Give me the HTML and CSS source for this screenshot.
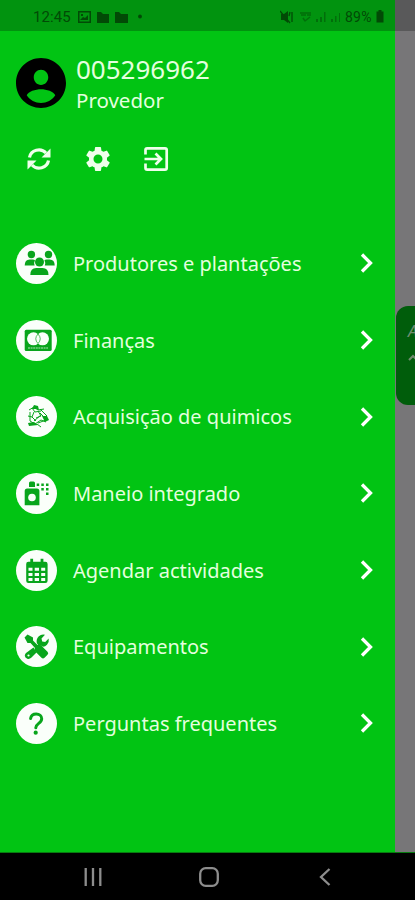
FILE: index.html
```html
<!DOCTYPE html>
<html lang="pt">
<head>
<meta charset="utf-8">
<title>Menu</title>
<link rel="stylesheet" href="styles.css">
</head>
<body>
<div class="phone">
  <div class="screen">
    <aside class="drawer">
      <header class="status">
        <span class="clock">12:45</span>
        <svg class="status-left" width="66" height="14" viewBox="0 0 66 14">
          <path fill-rule="evenodd" d="M0 1h13v12H0zM1.500 2.500v9h10v-9z"/><path d="M2 10l3-3 2 1 3-3v5zM3 4h2v2H3z"/>
          <path d="M19 2h4l2 2h6v9H19zM37 2h4l2 2h7v9H37z"/>
          <circle cx="62" cy="6.500" r="1.900"/>
        </svg>
        <svg class="status-right" width="62" height="14" viewBox="0 0 62 14">
          <path d="M1 4h3l4-3v12L4 10H1z"/>
          <path d="M0 1l10 12M10 2l-1 4M12 2v10" fill="none" stroke="#024a06" stroke-width="1.300"/>
          <g opacity=".5"><path d="M20 3h11M21 5h5M27 5h4M23 8l2 3M25 11l5-4" fill="none" stroke="#024a06" stroke-width="1.400"/>
          <path d="M36 12v-3h2v3zM40 12V7h2v5zM44 12V2h1.500v10zM51 12V9h2v3zM55 12V6h1.500v6zM59 12V3h1v9z"/></g>
        </svg>
        <span class="percent">89%</span>
        <svg class="battery" width="8" height="13" viewBox="0 0 8 13"><path d="M2.500 0h3v1.500H7.500V12.500H.5V1.500h2z"/></svg>
      </header>

      <section class="profile">
        <svg width="50" height="50" viewBox="2 2 20 20"><path d="M12 2C6.480 2 2 6.480 2 12s4.480 10 10 10 10-4.480 10-10S17.520 2 12 2zm0 4.700c1.600 0 2.900 1.350 2.900 3s-1.300 3.100-2.900 3.100-2.900-1.450-2.900-3.100 1.300-3 2.900-3zm0 13.300c-2.300 0-4.500-1.200-5.700-3.100.6-1.500 3.500-2.400 5.700-2.400s5.100.9 5.700 2.400c-1.200 1.900-3.400 3.100-5.700 3.100z"/></svg>
        <div class="who">
          <div class="account">005296962</div>
          <div class="role">Provedor</div>
        </div>
      </section>

      <nav class="actions">
        <svg width="26" height="26" viewBox="0 0 26 26">
          <path d="M3.500 11.500A9.500 9 0 0 1 20 7M22.500 14.500A9.500 9 0 0 1 6 19" fill="none" stroke="#efffeb" stroke-width="3.200"/>
          <path d="M24.500 2.500v9h-9zM1.500 23.500v-9h9z"/>
        </svg>
        <svg width="30" height="30" viewBox="0 0 24 24"><path d="M19.140 12.940c.04-.3.060-.61.060-.94s-.02-.64-.07-.94l2.030-1.580a.49.490 0 0 0 .12-.61l-1.920-3.320a.49.490 0 0 0-.59-.22l-2.390.96a7 7 0 0 0-1.620-.94l-.36-2.540a.48.480 0 0 0-.48-.41h-3.840a.48.480 0 0 0-.47.41l-.36 2.540c-.59.240-1.130.57-1.620.94l-2.390-.96a.48.480 0 0 0-.59.220L2.740 8.870a.48.480 0 0 0 .12.610l2.030 1.580c-.05.3-.09.630-.09.940s.02.640.07.940l-2.030 1.580a.49.490 0 0 0-.12.610l1.920 3.320c.12.220.37.290.59.220l2.390-.96c.5.380 1.030.7 1.620.94l.36 2.540c.05.240.24.410.48.410h3.840c.24 0 .44-.17.470-.41l.36-2.540c.59-.24 1.130-.56 1.620-.94l2.390.96c.22.080.47 0 .59-.22l1.920-3.320a.48.480 0 0 0-.12-.61zM12 15.600a3.600 3.600 0 1 1 0-7.200 3.600 3.600 0 0 1 0 7.200z"/></svg>
        <svg width="26" height="26" viewBox="0 0 26 26" fill="none" stroke="#efffeb" stroke-width="2.700">
          <path d="M2.500 8.500V4q0-1.700 1.700-1.700H22q1.700 0 1.700 1.700v18q0 1.700-1.700 1.700H4.200q-1.700 0-1.700-1.700v-4.500M1.500 13H17M12.500 7.500L18 13l-5.500 5.500"/>
        </svg>
      </nav>

      <ul class="menu">
        <li>
          <svg class="badge" viewBox="0 0 41 41"><circle class="disc" cx="20.500" cy="20.500" r="20.500"/>
            <circle cx="15.400" cy="11.500" r="3.700"/><circle cx="32.500" cy="11.500" r="3.700"/>
            <path d="M8.700 22.500q0-6 5-6h3q1.600 0 2.300.8-1.500 2.500-.4 5.200zM38.700 22.500q0-6-5-6h-3q-1.600 0-2.300.8 1.500 2.500.4 5.200zM14.300 32q0-7 6-7h6.200q6 0 6 7z"/><circle cx="23.500" cy="19" r="4.500"/>
          </svg><span>Produtores e plantações</span><svg class="chevron" viewBox="0 0 14 20"><path d="M2 1.500l8.500 8.500L2 18.500"/></svg>
        </li>
        <li>
          <svg class="badge" viewBox="0 0 41 41"><circle class="disc" cx="20.500" cy="20.500" r="20.500"/>
            <rect x="8.700" y="9.700" width="27" height="21.300" rx="1.500"/>
            <circle class="disc" cx="17.500" cy="18.800" r="6.500"/><circle class="disc" cx="26.500" cy="18.800" r="6.500"/>
            <path class="line" d="M22 14q-4.500 4.800 0 9.600q4.500-4.800 0-9.600" stroke-width=".7"/>
            <path class="light" d="M12 28h20" stroke-dasharray="2 .6" stroke-width="1" opacity=".7"/>
          </svg><span>Finanças</span><svg class="chevron" viewBox="0 0 14 20"><path d="M2 1.500l8.500 8.500L2 18.500"/></svg>
        </li>
        <li>
          <svg class="badge" viewBox="0 0 41 41"><circle class="disc" cx="20.500" cy="20.500" r="20.500"/>
            <path d="M16 13l2-4 4 1 1 4-3-1zM26 20l5 0 2 4-4 2zM12 27l6-1 4 3-9 1z"/>
            <path class="line" d="M13 14l5-3 4 3 6-1M14 16v9l5 3 6-4 5 2M18 16l-2 5 4 4M22 15l3 5-5 2M24 13l7 7M12 20l4 1M16 12l3 4 6-1M22 27l8-3M21 28l4 3M24 17l5 5M18 25l7-6" stroke-width="1"/>
          </svg><span>Acquisição de quimicos</span><svg class="chevron" viewBox="0 0 14 20"><path d="M2 1.500l8.500 8.500L2 18.500"/></svg>
        </li>
        <li>
          <svg class="badge" viewBox="0 0 41 41"><circle class="disc" cx="20.500" cy="20.500" r="20.500"/>
            <path d="M13 14v-4q0-1.500 1.500-1.500h3Q19 8.500 19 10v4zM8.700 18q0-2.500 2.500-2.500h9.700q2.500 0 2.500 2.500v14.300H8.700z"/><circle class="disc" cx="16" cy="24.500" r="3.800"/>
            <path d="M20.700 10.500h2.500v2.500h-2.500zM25.300 10.500h2.500v2.500h-2.500zM30 10.500h2.500v2.500H30zM25.300 15h2.500v2.500h-2.500zM30 15h2.500v2.500H30zM30 19.500h2.500V22H30z"/>
          </svg><span>Maneio integrado</span><svg class="chevron" viewBox="0 0 14 20"><path d="M2 1.500l8.500 8.500L2 18.500"/></svg>
        </li>
        <li>
          <svg class="badge" viewBox="0 0 41 41"><circle class="disc" cx="20.500" cy="20.500" r="20.500"/>
            <path d="M14.300 8.700h2.800v3h7.500v-3h2.800v3h2q2.200 0 2.200 2.200v16.800q0 2.200-2.200 2.200h-17q-2.200 0-2.200-2.200V13.900q0-2.200 2.200-2.200h1.900z"/>
            <path class="disc" d="M12.500 17.800h4v3h-4zM18.700 17.800h4.300v3h-4.300zM25.200 17.800h4v3h-4zM12.500 23h4v3h-4zM18.700 23h4.300v3h-4.300zM25.200 23h4v3h-4zM12.500 28.100h4v2.800h-4zM18.700 28.100h4.300v2.800h-4.300zM25.200 28.100h4v2.800h-4z"/>
          </svg><span>Agendar actividades</span><svg class="chevron" viewBox="0 0 14 20"><path d="M2 1.500l8.500 8.500L2 18.500"/></svg>
        </li>
        <li>
          <svg class="badge" viewBox="0 0 41 41"><circle class="disc" cx="20.500" cy="20.500" r="20.500"/>
            <path d="M8.500 11.500l3-3 5.500 3v3l4.500 4.500q2.500-.8 4 .7l6 6q1.500 1.500 0 3l-3 3q-1.500 1.500-3 0l-6-6q-1.500-1.500-.7-4L14.500 17h-3z"/>
            <path d="M17.500 21.500l3 5-5 5q-2 2-4.200 1.300-2.400-.8-2.500-3 0-1.500 1.200-2.700z"/><circle class="disc" cx="12.500" cy="29.500" r="1.100"/>
            <path d="M20.800 17q-.8-4 2-6.700 2.600-2.400 6.200-1.500l-3.500 3.600.7 3 3 .7 3.500-3.500q.7 3.600-1.700 6.200-1.800 1.800-4 2-2-2-4.700-1.500z"/>
          </svg><span>Equipamentos</span><svg class="chevron" viewBox="0 0 14 20"><path d="M2 1.500l8.500 8.500L2 18.500"/></svg>
        </li>
        <li>
          <svg class="badge" viewBox="0 0 41 41"><circle class="disc" cx="20.500" cy="20.500" r="20.500"/>
            <path class="line" d="M14.600 15.500c.5-3 2.700-4.500 5.600-4.500 3.200 0 5.500 2 5.500 4.800 0 4.700-5.900 4.500-5.900 9" stroke-width="3" stroke-linecap="round"/><circle cx="19.700" cy="29.700" r="2.100"/>
          </svg><span>Perguntas frequentes</span><svg class="chevron" viewBox="0 0 14 20"><path d="M2 1.500l8.500 8.500L2 18.500"/></svg>
        </li>
      </ul>
    </aside>
    <main class="behind">
      <div class="behind-status"></div>
      <div class="card"><span>A</span><svg width="16" height="16" viewBox="0 0 16 16"><path d="M1 10l4-4 4 4"/></svg></div>
    </main>
  </div>
  <footer class="system">
    <svg width="18" height="18" viewBox="0 0 18 18"><path d="M1.700 0v18M9 0v18M16.300 0v18"/></svg>
    <svg width="20" height="20" viewBox="0 0 20 20"><rect x="1.200" y="1.200" width="17.600" height="17.600" rx="5.500"/></svg>
    <svg width="12" height="18" viewBox="0 0 12 18"><path d="M10.500 1L2 9l8.500 8"/></svg>
  </footer>
</div>
</body>
</html>
```
FILE: styles.css
```css
* { box-sizing: border-box; }
body { margin: 0; font-family: "Noto Sans", "Open Sans", sans-serif; }
.phone { width: 415px; height: 900px; display: flex; flex-direction: column; overflow: hidden; background: #000; }
.screen { height: 853px; display: flex; border-bottom: 1px solid #087b10; }
.drawer { width: 395px; flex: none; background: #01c413; color: #e4ffdf; }
.status { height: 31px; padding: 2px 11px 0 33px; display: flex; align-items: center; background: #01930f; color: #024a06; fill: #024a06; font-family: Roboto, sans-serif; font-size: 15px; }
.clock { width: 38px; letter-spacing: .1px; white-space: nowrap; }
.status-left { margin-left: 7px; }
.status-right { margin-left: auto; }
.percent { width: 29px; margin-left: 3px; font-size: 14px; letter-spacing: .2px; white-space: nowrap; }
.battery { margin-left: 2px; }
.profile { height: 104px; padding: 0 16px; display: flex; align-items: center; gap: 10px; }
.profile svg { flex: none; }
.account { font-size: 26px; line-height: 34px; }
.role { font-size: 20.500px; line-height: 28px; }
.actions { height: 90px; padding: 11px 26px 0; display: flex; align-items: flex-start; gap: 31px; fill: #efffeb; }
.actions svg:nth-child(2) { margin: -2px 0 0 0; }
.actions svg:nth-child(3) { margin-left: -1px; }
.menu { margin: 0; padding: 0; list-style: none; }
.menu li { height: 76.7px; padding: 0 21px 0 16px; display: flex; align-items: center; gap: 16px; font-size: 20px; }
.menu span { flex: 1; white-space: nowrap; }
.badge { width: 41px; height: 41px; flex: none; fill: #08a51c; }
.disc { fill: #fafffa; }
.line { fill: none; stroke: #08a51c; }
.light { fill: none; stroke: #fff; }
.chevron { width: 14px; height: 20px; fill: none; stroke: #fff; stroke-width: 3.300; }
.behind { flex: 1; background: #777678; overflow: hidden; }
.behind-status { height: 31px; background: #59595a; }
.card { width: 60px; height: 99px; margin: 275px 0 0 1px; padding: 14px 0 0 12px; border-radius: 12px; background: #005d0b; color: #718d70; font-size: 17px; line-height: 22px; display: flex; flex-direction: column; gap: 8px; }
.card span { font-style: italic; }
.card svg { fill: none; stroke: #718d70; stroke-width: 2; }
.system { flex: 1; padding: 0 84px; display: grid; grid-template-columns: 115px 1fr 12px; align-items: center; fill: none; stroke: #8d8d8d; stroke-width: 2.300; }
```
